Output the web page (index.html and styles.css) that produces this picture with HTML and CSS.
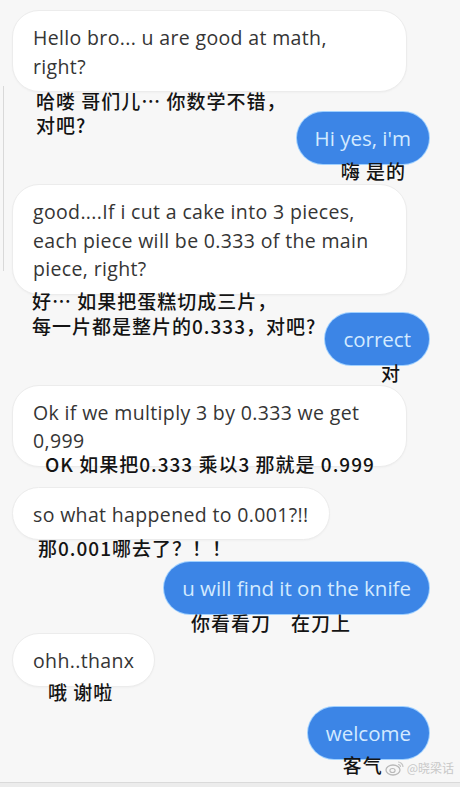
FILE: index.html
```html
<!DOCTYPE html>
<html lang="zh-CN">
<head>
    <meta charset="UTF-8">
    <meta name="viewport" content="width=device-width, initial-scale=1.0">
    <title>Chat</title>
    <link rel="stylesheet" href="styles.css">
</head>
<body>
    <div class="screen">
        <div class="side-rail"></div>

        <div class="chat">
            <div class="bubble in b1">Hello bro... u are good at math,<br>right?</div>
            <div class="caption c1">哈喽 哥们儿… 你数学不错，<br>对吧?</div>

            <div class="bubble out b2">Hi yes, i'm</div>
            <div class="caption right c2">嗨 是的</div>

            <div class="bubble in b3">good....If i cut a cake into 3 pieces,<br>each piece will be 0.333 of the main<br>piece, right?</div>
            <div class="caption c3">好… 如果把蛋糕切成三片，<br>每一片都是整片的0.333，对吧?</div>

            <div class="bubble out b4">correct</div>
            <div class="caption right c4">对</div>

            <div class="bubble in b5">Ok if we multiply 3 by 0.333 we get<br>0,999</div>
            <div class="caption c5">OK 如果把0.333 乘以3 那就是 0.999</div>

            <div class="bubble in b6">so what happened to 0.001?!!</div>
            <div class="caption c6">那0.001哪去了？！！</div>

            <div class="bubble out b7">u will find it on the knife</div>
            <div class="caption right c7">你看看刀　在刀上</div>

            <div class="bubble in b8">ohh..thanx</div>
            <div class="caption c8">哦 谢啦</div>

            <div class="bubble out b9">welcome</div>
            <div class="last-row">
                <span class="caption c9">客气</span>
                <span class="mark">
                    <svg width="20" height="18" viewBox="0 0 20 18">
                        <ellipse cx="8" cy="11" rx="7" ry="5" fill="none" stroke="#b9b9b9" stroke-width="1.3"/>
                        <ellipse cx="7.5" cy="11.5" rx="2.6" ry="2" fill="none" stroke="#b9b9b9" stroke-width="1.1"/>
                        <path d="M13 3 a5 5 0 0 1 5 5" fill="none" stroke="#c4c4c4" stroke-width="1.2"/>
                        <path d="M13 5.5 a2.5 2.5 0 0 1 2.5 2.5" fill="none" stroke="#c4c4c4" stroke-width="1.1"/>
                    </svg>
                    <span class="mark-text">@晓梁话</span>
                </span>
            </div>
        </div>

        <div class="bottom-bar"></div>
    </div>
</body>
</html>
```

FILE: styles.css
```css
body {
    margin: 0;
    background-color: #f7f7f7;
    font-family: "Open Sans", "Noto Sans CJK SC", sans-serif;
}

.screen {
    position: relative;
    height: 787px;
    display: flex;
    flex-direction: column;
    overflow: hidden;
}

.side-rail {
    position: absolute;
    left: 3px;
    top: 86px;
    width: 1px;
    height: 185px;
    background-color: #d9d9d9;
}

.chat {
    flex: 1;
    min-height: 0;
    display: flex;
    flex-direction: column;
    padding-top: 10px;
}

.bubble {
    box-sizing: border-box;
    white-space: nowrap;
}

.bubble.in {
    align-self: flex-start;
    margin-left: 12px;
    padding: 13px 20px 10px;
    background-color: #fff;
    border: 1px solid #ececec;
    border-radius: 27px;
    color: #353535;
    font-size: 19.5px;
    letter-spacing: 0.35px;
    line-height: 28.5px;
    box-shadow: 0 1px 2px rgba(0, 0, 0, 0.03);
}

.bubble.out {
    align-self: flex-end;
    margin-right: 31px;
    height: 52px;
    padding: 0 18px;
    background-color: #3c85e6;
    border-radius: 26px;
    color: #d3eaff;
    font-size: 20.5px;
    line-height: 52px;
    box-shadow: 0 0 0 1px #9fd0ff;
}

.b1, .b3, .b5 {
    width: 395px;
}

.caption {
    color: #141414;
    font-family: "Noto Sans CJK SC", sans-serif;
    font-weight: 500;
    font-size: 19px;
    letter-spacing: 1px;
    line-height: 24px;
    white-space: nowrap;
}

.caption.right {
    align-self: flex-end;
}

/* vertical rhythm, taken row by row from the screenshot */
.c1 { margin: -3px 0 0 36px; }
.b2 { margin-top: -25px; }
.c2 { margin: -5px 54px 0 0; }
.b3 { margin-top: 1px; }
.c3 { margin: -7px 0 0 32px; line-height: 25px; }
.b4 { margin-top: -25px; }
.c4 { margin: -4px 59px 0 0; }
.b5 { margin-top: 0; }
.c5 { margin: -15px 0 0 45px; }
.b6 { margin-top: 11px; }
.c6 { margin: -4px 0 0 38px; }
.b7 { margin-top: 2px; }
.c7 { margin: -3px 109px 0 0; }
.b8 { margin-top: -2px; }
.c8 { margin: -7px 0 0 48px; }
.b9 { margin-top: 3px; }

.last-row {
    align-self: flex-end;
    display: flex;
    align-items: flex-end;
    margin: -6px 6px 0 0;
}

.mark {
    display: flex;
    align-items: center;
    margin-left: 2px;
}

.mark-text {
    color: #c8c8c8;
    font-size: 12px;
    font-family: "Noto Sans CJK SC", sans-serif;
    margin-left: 2px;
}

.bottom-bar {
    flex-shrink: 0;
    height: 4px;
    border-top: 1px solid #dadada;
    background-color: #ececec;
}
```
